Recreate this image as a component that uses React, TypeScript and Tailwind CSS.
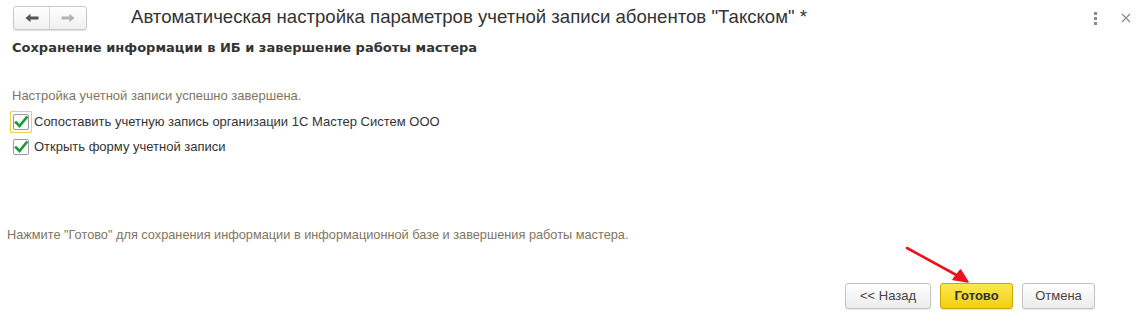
import React from 'react'

function Check({ focused }: { focused?: boolean }) {
  return (
    <span className={focused ? 'flex items-center justify-center w-[22px] h-[22px] border border-[#e8d44d] rounded-[1px]' : 'flex items-center justify-center w-[22px] h-[22px]'}>
      <span className="flex items-center justify-center w-[16px] h-[16px] bg-white border border-[#9a9a9a] rounded-[2px]">
        <svg width="14" height="12" viewBox="0 0 14 12">
          <path d="M2 6.5 L5.5 10 L12.5 1.5" fill="none" stroke="#1a9a3a" strokeWidth="2.6" strokeLinecap="square" />
        </svg>
      </span>
    </span>
  )
}

export default function App() {
  return (
    <div className="w-[1145px] h-[322px] bg-white relative overflow-hidden text-[#333]" style={{ fontFamily: 'Arial, "Liberation Sans", sans-serif' }}>
      {/* header */}
      <div className="flex items-center h-[35px] pl-[13px] pr-[14px]">
        <div className="flex h-[24px] border border-[#c8c8c8] rounded-[3px] bg-gradient-to-b from-white to-[#f0f0f0] shadow-[0_1px_1px_rgba(0,0,0,0.12)]">
          <div className="w-[36px] flex items-center justify-center border-r border-[#d6d6d6]">
            <svg width="14" height="10" viewBox="0 0 14 10">
              <path d="M0.5 5 L5.5 0.8 L5.5 3.6 L13.5 3.6 L13.5 6.4 L5.5 6.4 L5.5 9.2 Z" fill="#555" />
            </svg>
          </div>
          <div className="w-[36px] flex items-center justify-center">
            <svg width="14" height="10" viewBox="0 0 14 10">
              <path d="M13.5 5 L8.5 0.8 L8.5 3.6 L0.5 3.6 L0.5 6.4 L8.5 6.4 L8.5 9.2 Z" fill="#b3b3b3" />
            </svg>
          </div>
        </div>
        <div className="ml-[44px] text-[18.6px] leading-none text-[#333] whitespace-nowrap">
          Автоматическая настройка параметров учетной записи абонентов "Такском" *
        </div>
        <div className="ml-auto flex items-center gap-[24px] pt-[1px]">
          <div className="flex flex-col gap-[2px]">
            <span className="w-[3px] h-[3px] bg-[#8a8a8a]" />
            <span className="w-[3px] h-[3px] bg-[#8a8a8a]" />
            <span className="w-[3px] h-[3px] bg-[#8a8a8a]" />
          </div>
          <svg width="10" height="10" viewBox="0 0 10 10">
            <path d="M1 1 L9 9 M9 1 L1 9" stroke="#8a8a8a" strokeWidth="1.2" />
          </svg>
        </div>
      </div>

      {/* subtitle */}
      <div className="pl-[12px] pt-[5px] text-[13px] font-bold text-[#333] leading-[16px]" style={{ fontFamily: '"DejaVu Sans", Tahoma, sans-serif' }}>
        Сохранение информации в ИБ и завершение работы мастера
      </div>

      <div className="pl-[12px] pt-[32px] text-[13px] leading-[16px] text-[#7f7560]">
        Настройка учетной записи успешно завершена.
      </div>

      <div className="flex flex-col gap-[3px] pl-[10px] pt-[7px] text-[13px] text-[#333]">
        <label className="flex items-center gap-[2px]">
          <Check focused />
          <span>Сопоставить учетную запись организации 1С Мастер Систем ООО</span>
        </label>
        <label className="flex items-center gap-[2px]">
          <Check />
          <span>Открыть форму учетной записи</span>
        </label>
      </div>

      <div className="pl-[7px] pt-[69px] text-[12.75px] leading-[16px] text-[#7f7560]">
        Нажмите "Готово" для сохранения информации в информационной базе и завершения работы мастера.
      </div>

      {/* buttons */}
      <div className="flex justify-end gap-[9px] pr-[50px] pt-[40px] text-[13px]">
        <button className="w-[86px] h-[26px] border border-[#c3c3c3] rounded-[3px] bg-gradient-to-b from-white to-[#ececec] shadow-[0_1px_1px_rgba(0,0,0,0.1)] text-[#444]">
          &lt;&lt; Назад
        </button>
        <button className="w-[73px] h-[26px] border border-[#c9a800] rounded-[3px] bg-gradient-to-b from-[#fbe84a] to-[#f2cf00] shadow-[0_1px_1px_rgba(0,0,0,0.12)] font-bold text-[#333]">
          Готово
        </button>
        <button className="w-[73px] h-[26px] border border-[#c3c3c3] rounded-[3px] bg-gradient-to-b from-white to-[#ececec] shadow-[0_1px_1px_rgba(0,0,0,0.1)] text-[#444]">
          Отмена
        </button>
      </div>

      {/* annotation arrow */}
      <svg className="absolute left-[900px] top-[240px]" width="80" height="50" viewBox="0 0 80 50">
        <path d="M7 8 L60 37" stroke="#e8141c" strokeWidth="2.6" strokeLinecap="round" />
        <path d="M68 42 L53 39.5 L60.5 30 Z" fill="#e8141c" stroke="#e8141c" strokeWidth="1.5" strokeLinejoin="round" />
      </svg>
    </div>
  )
}
